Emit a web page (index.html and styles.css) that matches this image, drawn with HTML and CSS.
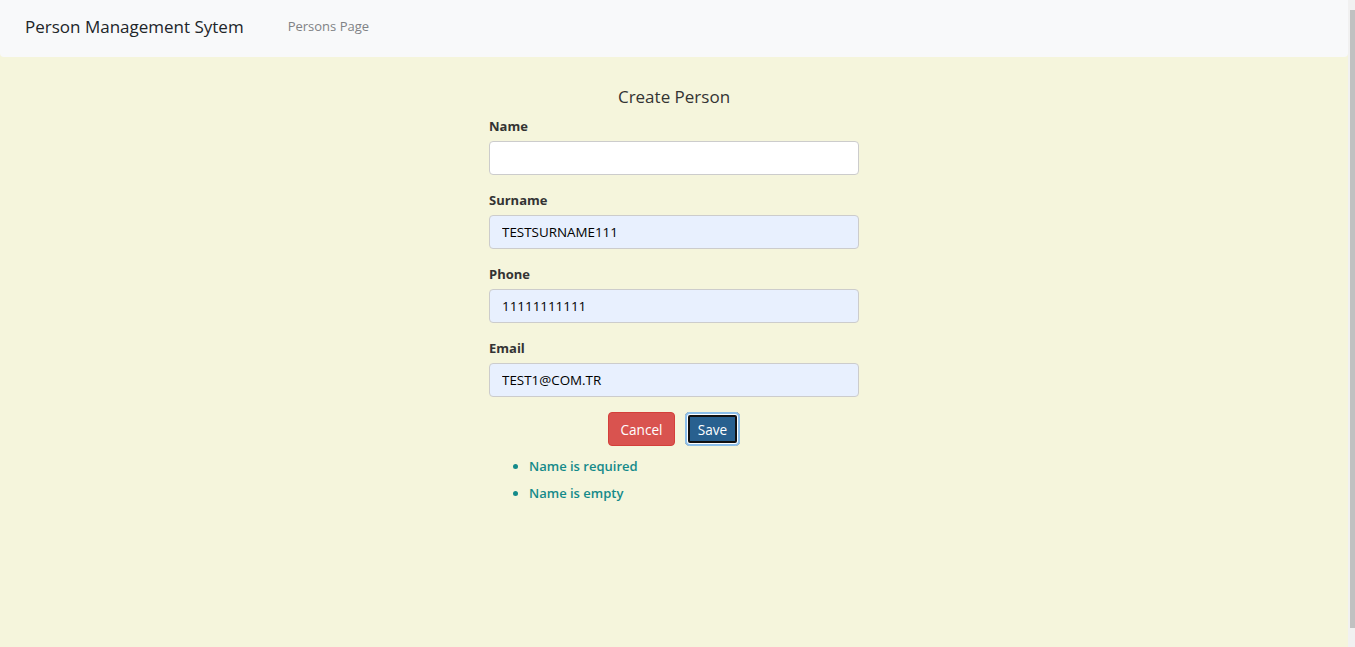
FILE: index.html
```html
<!DOCTYPE html>
<html lang="en">
<head>
<meta charset="utf-8">
<title>Person Management Sytem</title>
<link rel="stylesheet" href="styles.css">
</head>
<body>
<div class="page">
  <nav class="navbar">
    <span class="brand">Person Management Sytem</span>
    <a class="nav-link" href="#">Persons Page</a>
  </nav>
  <main class="main">
    <form class="form">
      <h2 class="title">Create Person</h2>
      <div class="field">
        <label class="label">Name</label>
        <input class="input" type="text" value="">
      </div>
      <div class="field">
        <label class="label">Surname</label>
        <input class="input filled" type="text" value="TESTSURNAME111">
      </div>
      <div class="field">
        <label class="label">Phone</label>
        <input class="input filled" type="text" value="11111111111">
      </div>
      <div class="field">
        <label class="label">Email</label>
        <input class="input filled" type="text" value="TEST1@COM.TR">
      </div>
      <div class="actions">
        <button type="button" class="btn btn-cancel">Cancel</button>
        <button type="button" class="btn btn-save">Save</button>
      </div>
      <ul class="errors">
        <li>Name is required</li>
        <li>Name is empty</li>
      </ul>
    </form>
  </main>
</div>
<div class="scrollbar"><div class="thumb"></div></div>
</body>
</html>
```
FILE: styles.css
```css
* { box-sizing: border-box; }
html, body { margin: 0; padding: 0; height: 100%; }
body {
  background: #f5f5dc;
  font-family: "Open Sans", "Noto Sans", sans-serif;
  color: #212529;
  overflow: hidden;
}
.page {
  width: 1348px;
  height: 647px;
  background: #f5f5dc;
}
.navbar {
  height: 57px;
  background: #f8f9fa;
  border-radius: 0 0 4px 4px;
  display: flex;
  align-items: center;
  padding: 0 25px;
}
.brand {
  font-size: 17px;
  color: #212529;
  margin-right: 44px;
  margin-top: -4px;
}
.nav-link {
  font-size: 13px;
  color: #808285;
  text-decoration: none;
  margin-top: -5px;
}
.main {
  display: flex;
  justify-content: center;
  padding-top: 29px;
}
.form {
  width: 370px;
}
.title {
  margin: 0 0 8px;
  font-size: 17px;
  font-weight: 400;
  line-height: 22px;
  text-align: center;
  color: #333;
}
.field {
  display: flex;
  flex-direction: column;
  margin-bottom: 15px;
}
.label {
  font-size: 13px;
  font-weight: 700;
  line-height: 20px;
  margin-bottom: 5px;
  color: #333;
}
.input {
  height: 34px;
  border: 1px solid #ccc;
  border-radius: 4px;
  background: #fff;
  padding: 0 12px;
  font-family: inherit;
  font-size: 13.4px;
  color: #000;
}
.input.filled { background: #e8f0fe; }
.actions {
  display: flex;
  justify-content: center;
  gap: 10px;
}
.btn {
  height: 34px;
  border-radius: 4px;
  font-family: inherit;
  font-size: 13.6px;
  color: #fff;
  padding: 0 8px;
  cursor: pointer;
}
.btn-cancel {
  width: 67px;
  background: #d9534f;
  border: 1px solid #d43f3a;
}
.btn-save {
  width: 55px;
  background: #28608f;
  border: none;
  border-radius: 5px;
  box-shadow: inset 0 0 0 2px #8cbfea, inset 0 0 0 3px #ffffff, inset 0 0 0 5px #111;
}
.errors {
  margin: 7px 0 0;
  padding-left: 40px;
  color: #148a8a;
  font-size: 13px;
  font-weight: 600;
  line-height: 27px;
}
.scrollbar {
  position: fixed;
  top: 0;
  right: 0;
  width: 7px;
  height: 647px;
  background: #f1f1f1;
  padding: 10px 0 19px 2px;
}
.thumb {
  width: 5px;
  height: 100%;
  background: #c1c1c1;
}
```
